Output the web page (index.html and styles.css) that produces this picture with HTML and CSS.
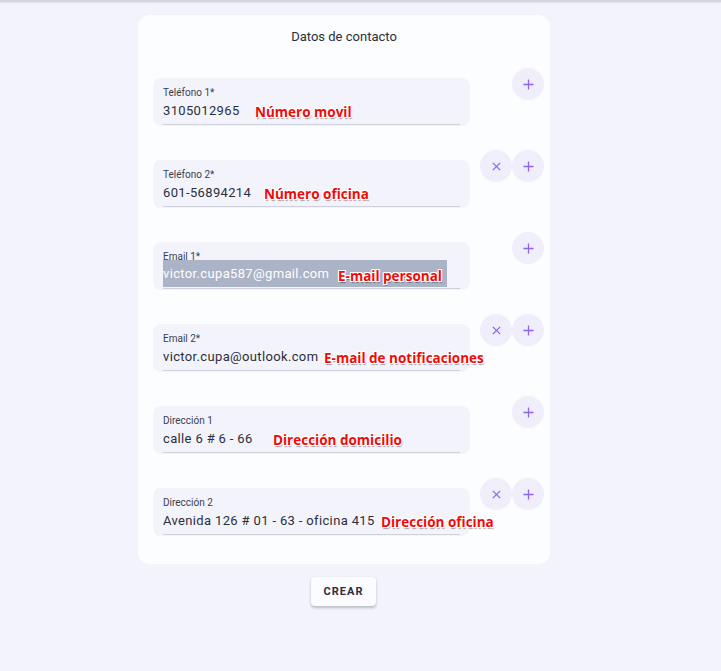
FILE: index.html
```html
<!DOCTYPE html>
<html lang="es">
<head>
  <meta charset="UTF-8">
  <title>Datos de contacto</title>
  <link rel="stylesheet" href="styles.css">
</head>
<body>
<div class="topbar"></div>
<div class="page">
  <div class="card">
    <div class="card-title">Datos de contacto</div>

    <div class="row">
      <div class="field">
        <div class="label">Teléfono 1*</div>
        <div class="value">3105012965</div>
        <span class="note" style="left: 102px">Número movil</span>
      </div>
      <div class="actions">
        <button class="round plus" title="Agregar"><svg viewBox="0 0 12 12"><path d="M6 0.5v11M0.5 6h11"/></svg></button>
      </div>
    </div>

    <div class="row">
      <div class="field">
        <div class="label">Teléfono 2*</div>
        <div class="value">601-56894214</div>
        <span class="note" style="left: 111px">Número oficina</span>
      </div>
      <div class="actions">
        <button class="round" title="Quitar"><svg viewBox="0 0 12 12"><path d="M2 2l8 8M10 2l-8 8"/></svg></button>
        <button class="round" title="Agregar"><svg viewBox="0 0 12 12"><path d="M6 0.5v11M0.5 6h11"/></svg></button>
      </div>
    </div>

    <div class="row">
      <div class="field">
        <div class="label">Email 1*</div>
        <div class="value selected">victor.cupa587@gmail.com</div>
        <span class="note" style="left: 185px">E-mail personal</span>
      </div>
      <div class="actions">
        <button class="round" title="Agregar"><svg viewBox="0 0 12 12"><path d="M6 0.5v11M0.5 6h11"/></svg></button>
      </div>
    </div>

    <div class="row">
      <div class="field">
        <div class="label">Email 2*</div>
        <div class="value">victor.cupa@outlook.com</div>
        <span class="note" style="left: 171px">E-mail de notificaciones</span>
      </div>
      <div class="actions">
        <button class="round" title="Quitar"><svg viewBox="0 0 12 12"><path d="M2 2l8 8M10 2l-8 8"/></svg></button>
        <button class="round" title="Agregar"><svg viewBox="0 0 12 12"><path d="M6 0.5v11M0.5 6h11"/></svg></button>
      </div>
    </div>

    <div class="row">
      <div class="field">
        <div class="label">Dirección 1</div>
        <div class="value">calle 6 # 6 - 66</div>
        <span class="note" style="left: 120px">Dirección domicilio</span>
      </div>
      <div class="actions">
        <button class="round" title="Agregar"><svg viewBox="0 0 12 12"><path d="M6 0.5v11M0.5 6h11"/></svg></button>
      </div>
    </div>

    <div class="row">
      <div class="field">
        <div class="label">Dirección 2</div>
        <div class="value">Avenida 126 # 01 - 63 - oficina 415</div>
        <span class="note" style="left: 228px">Dirección oficina</span>
      </div>
      <div class="actions">
        <button class="round" title="Quitar"><svg viewBox="0 0 12 12"><path d="M2 2l8 8M10 2l-8 8"/></svg></button>
        <button class="round" title="Agregar"><svg viewBox="0 0 12 12"><path d="M6 0.5v11M0.5 6h11"/></svg></button>
      </div>
    </div>
  </div>

  <div class="footer">
    <button class="submit">CREAR</button>
  </div>
</div>
</body>
</html>
```

FILE: styles.css
```css
html, body {
  margin: 0;
  padding: 0;
}

body {
  background: #f2f3fb;
  font-family: Roboto, "Liberation Sans", sans-serif;
  color: #2b2f3c;
  min-height: 671px;
}

.topbar {
  height: 2px;
  background: #d3d6de;
  box-shadow: 0 1px 2px rgba(0, 0, 0, 0.08);
}

.page {
  width: 412px;
  margin: 13px 0 0 138px;
}

.card {
  background: #fbfdff;
  border-radius: 12px;
  padding: 14px 6px 28px 15px;
  display: flex;
  flex-direction: column;
  gap: 34px;
}

.card-title {
  text-align: center;
  font-size: 13px;
  line-height: 16px;
  color: #2b2f3c;
  margin: 0 9px -1px 0;
}

.row {
  display: flex;
  align-items: flex-start;
}

.field {
  position: relative;
  width: 317px;
  height: 48px;
  box-sizing: border-box;
  background: #f3f4fb;
  border-radius: 8px;
  padding: 9px 10px 0 10px;
}

.field::after {
  content: "";
  position: absolute;
  left: 10px;
  right: 10px;
  top: 46px;
  height: 1px;
  background: #cfd1dc;
}

.label {
  font-size: 10px;
  line-height: 12px;
  color: #3a3e4c;
}

.value {
  position: relative;
  font-size: 13px;
  line-height: 16px;
  margin-top: 4px;
  color: #2b2f3c;
  letter-spacing: 0.35px;
}

.value.selected {
  background: #abb3c6;
  color: #ffffff;
  width: 284px;
  padding: 6px 0 5px 0;
  margin-top: -3px;
}

.note {
  position: absolute;
  top: 25px;
  font-family: "Open Sans", sans-serif;
  font-weight: bold;
  font-size: 13.5px;
  line-height: 18px;
  color: #f00a0a;
  white-space: nowrap;
  z-index: 2;
  text-shadow:
    1px 0 0 #fff, -1px 0 0 #fff, 0 1px 0 #fff, 0 -1px 0 #fff,
    1px 1px 0 #fff, -1px -1px 0 #fff, 1px -1px 0 #fff, -1px 1px 0 #fff,
    1px 2px 1px rgba(0, 0, 0, 0.35);
}

.actions {
  width: 64px;
  margin: -10px 0 0 10px;
  display: flex;
  justify-content: flex-end;
}

.round {
  width: 32px;
  height: 32px;
  border: none;
  border-radius: 50%;
  background: #efeefa;
  padding: 0;
  display: flex;
  align-items: center;
  justify-content: center;
  cursor: pointer;
}

.round svg {
  width: 11px;
  height: 11px;
  fill: none;
  stroke: #8d63f0;
  stroke-width: 1.4;
}

.footer {
  display: flex;
  justify-content: center;
  margin: 13px 0 0 -1px;
}

.submit {
  width: 65px;
  height: 29px;
  background: #fbfcff;
  border: none;
  border-radius: 4px;
  box-shadow: 0 2px 3px rgba(0, 0, 0, 0.22), 0 0 1px rgba(0, 0, 0, 0.1);
  font-family: Roboto, sans-serif;
  font-weight: bold;
  font-size: 11px;
  letter-spacing: 1px;
  color: #2b2f3c;
  cursor: pointer;
}
```
